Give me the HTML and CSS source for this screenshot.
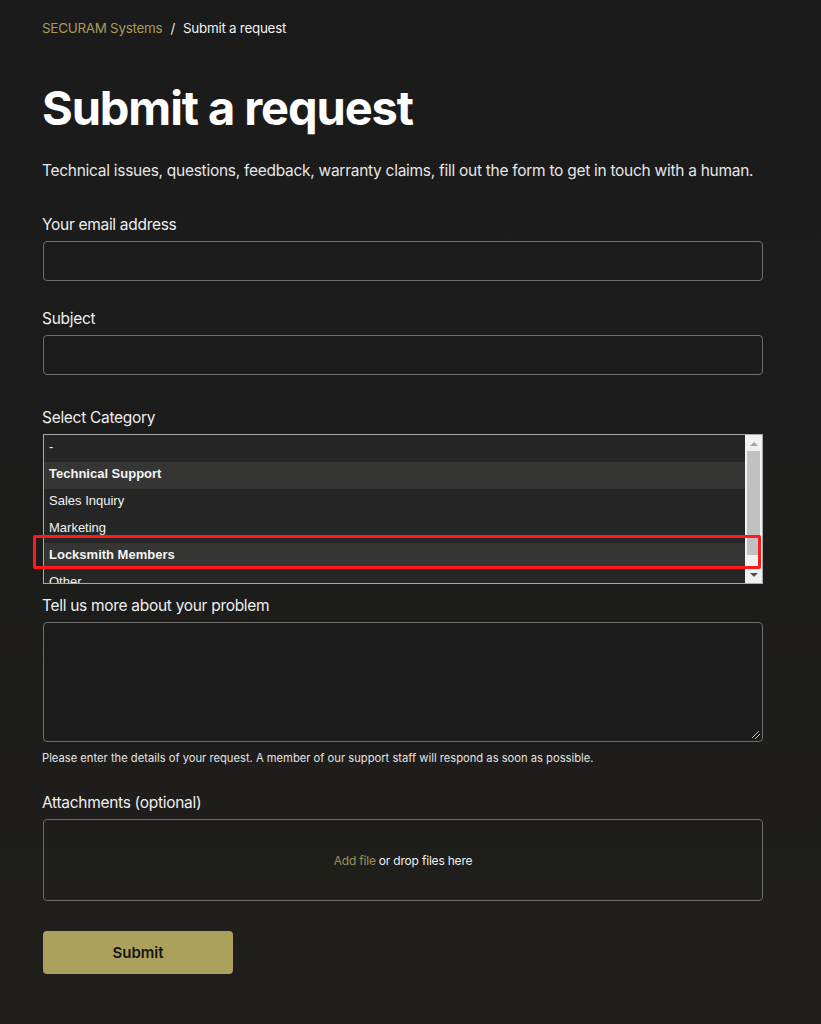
FILE: index.html
```html
<!DOCTYPE html>
<html lang="en">
<head>
<meta charset="utf-8">
<title>Submit a request</title>
<link rel="stylesheet" href="styles.css">
</head>
<body>
<main class="page">
  <nav class="crumbs"><a class="crumb-link" href="#">SECURAM Systems</a><span class="sep">/</span><span class="crumb-current">Submit a request</span></nav>
  <h1 class="title">Submit a request</h1>
  <p class="lead">Technical issues, questions, feedback, warranty claims, fill out the form to get in touch with a human.</p>

  <form class="form">
    <div class="field">
      <label class="label">Your email address</label>
      <div class="input"></div>
    </div>
    <div class="field">
      <label class="label">Subject</label>
      <div class="input"></div>
    </div>
    <div class="field field-select">
      <label class="label">Select Category</label>
      <div class="listbox">
        <div class="options">
          <div class="opt opt-first">-</div>
          <div class="opt opt-hl">Technical Support</div>
          <div class="opt">Sales Inquiry</div>
          <div class="opt">Marketing</div>
          <div class="opt opt-hl">Locksmith Members</div>
          <div class="opt">Other</div>
        </div>
        <div class="scrollbar">
          <div class="arrow arrow-up"></div>
          <div class="track"><div class="thumb"></div></div>
          <div class="arrow arrow-down"></div>
        </div>
        <div class="mark"></div>
      </div>
    </div>
    <div class="field field-text">
      <label class="label">Tell us more about your problem</label>
      <div class="textarea"><span class="grip"></span></div>
      <p class="hint">Please enter the details of your request. A member of our support staff will respond as soon as possible.</p>
    </div>
    <div class="field field-attach">
      <label class="label">Attachments (optional)</label>
      <div class="drop"><span class="add">Add file</span>&nbsp;or drop files here</div>
    </div>
    <button type="button" class="submit">Submit</button>
  </form>
</main>
</body>
</html>
```
FILE: styles.css
```css
html, body {
  margin: 0;
  padding: 0;
}
body {
  min-height: 1024px;
  background: linear-gradient(180deg, #1b1b1b 0%, #1c1c1b 50%, #201f1c 100%);
  color: #f2f2f2;
  font-family: Inter, "Liberation Sans", sans-serif;
}
.page {
  width: 721px;
  padding: 19px 0 50px 42px;
}
.crumbs {
  font-size: 13.4px;
  line-height: 18px;
  display: flex;
  align-items: center;
  letter-spacing: -0.25px;
}
.crumb-link {
  color: #a79d5c;
  text-decoration: none;
}
.sep {
  margin: 0 8px;
  color: #e8e8e8;
}
.crumb-current {
  color: #f0f0f0;
}
.title {
  margin: 44px 0 0;
  font-size: 47px;
  line-height: 54px;
  font-weight: 700;
  letter-spacing: -1.1px;
  color: #ffffff;
}
.lead {
  margin: 25px 0 0;
  font-size: 15.5px;
  line-height: 22px;
  letter-spacing: -0.28px;
  color: #e6e6e6;
}
.form {
  margin-top: 32px;
  display: flex;
  flex-direction: column;
}
.field {
  display: flex;
  flex-direction: column;
  margin-bottom: 27px;
}
.label {
  font-size: 15.5px;
  line-height: 22px;
  letter-spacing: -0.3px;
  color: #efefef;
  margin-bottom: 5px;
}
.input {
  margin-left: 1px;
  height: 38px;
  border: 1px solid #6e6e6e;
  border-radius: 4px;
  background: #1c1c1c;
}
.field-select {
  margin-top: 5px;
  margin-bottom: 11px;
}
.listbox {
  position: relative;
  margin-left: 1px;
  height: 148px;
  border: 1px solid #a9a9a9;
  background: #262626;
  display: flex;
  font-family: "Liberation Sans", Arial, sans-serif;
  font-size: 13px;
  color: #f4f4f4;
}
.options {
  flex: 1;
  overflow: hidden;
}
.opt {
  height: 27px;
  line-height: 23px;
  padding-left: 5px;
  white-space: nowrap;
}
.opt-first {
  line-height: 24px;
}
.opt-hl {
  background: #353633;
  font-weight: 700;
}
.scrollbar {
  width: 17px;
  background: #f1f1f1;
  display: flex;
  flex-direction: column;
  align-items: center;
}
.arrow {
  width: 0;
  height: 0;
  border-left: 4px solid transparent;
  border-right: 4px solid transparent;
}
.arrow-up {
  margin-top: 7px;
  border-bottom: 4px solid #a3a3a3;
}
.arrow-down {
  margin-bottom: 6px;
  border-top: 4px solid #505050;
}
.track {
  flex: 1;
  width: 100%;
  padding: 5px 2px 0;
  box-sizing: border-box;
}
.thumb {
  height: 104px;
  background: #c1c1c1;
}
.mark {
  position: absolute;
  left: -11px;
  top: 100px;
  width: 722px;
  height: 28px;
  border: 3px solid #ff1b1b;
  border-radius: 2px;
  pointer-events: none;
}
.textarea {
  position: relative;
  margin-left: 1px;
  height: 118px;
  border: 1px solid #6e6e6e;
  border-radius: 4px;
  background: #1c1c1c;
}
.grip {
  position: absolute;
  right: 2px;
  bottom: 2px;
  width: 8px;
  height: 8px;
  background: linear-gradient(135deg, transparent 0 40%, #bdbdbd 40% 50%, transparent 50% 65%, #bdbdbd 65% 75%, transparent 75%);
}
.hint {
  margin: 9px 0 0;
  font-size: 11.2px;
  line-height: 14px;
  letter-spacing: 0;
  color: #e4e4e4;
}
.field-text {
  margin-bottom: 27px;
}
.drop {
  margin-left: 1px;
  border: 1px solid #6e6e6e;
  border-radius: 4px;
  display: flex;
  align-items: center;
  justify-content: center;
  box-sizing: border-box;
  height: 82px;
  font-size: 12px;
  letter-spacing: -0.2px;
  color: #efefef;
}
.add {
  color: #9c9558;
}
.field-attach {
  margin-bottom: 30px;
}
.submit {
  margin-left: 1px;
  width: 190px;
  height: 43px;
  border: 0;
  border-radius: 4px;
  background: #aba15d;
  color: #151515;
  font-family: Inter, "Liberation Sans", sans-serif;
  font-size: 15px;
  font-weight: 600;
  cursor: pointer;
}
```
